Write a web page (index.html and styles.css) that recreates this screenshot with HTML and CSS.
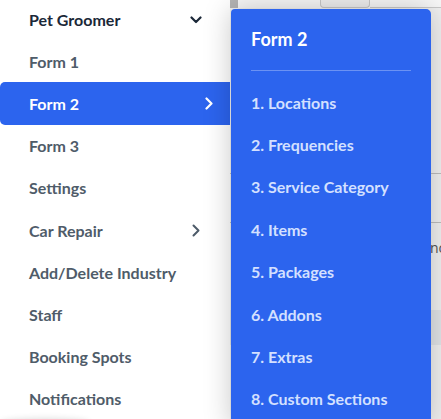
FILE: index.html
```html
<!DOCTYPE html>
<html>
<head>
<meta charset="utf-8">
<link rel="stylesheet" href="styles.css">
</head>
<body>
<div class="app">
  <aside class="sidebar">
    <ul class="nav">
      <li class="nav-item nav-head">
        <span>Pet Groomer</span>
        <svg class="chev-down" width="12" height="8" viewBox="0 0 12 8"><path d="M1.5 1.5 L6 6 L10.5 1.5" fill="none" stroke="#1b2838" stroke-width="2.2" stroke-linecap="round" stroke-linejoin="round"/></svg>
      </li>
      <li class="nav-item">Form 1</li>
      <li class="nav-item active">
        <span>Form 2</span>
        <svg class="chev-right" width="8" height="13" viewBox="0 0 8 13"><path d="M1.5 1.5 L6.5 6.5 L1.5 11.5" fill="none" stroke="#ffffff" stroke-width="2.2" stroke-linecap="round" stroke-linejoin="round"/></svg>
      </li>
      <li class="nav-item">Form 3</li>
      <li class="nav-item">Settings</li>
      <li class="nav-item">
        <span>Car Repair</span>
        <svg class="chev-right sub" width="8" height="13" viewBox="0 0 8 13"><path d="M1.5 1.5 L6.5 6.5 L1.5 11.5" fill="none" stroke="#4d5b69" stroke-width="2" stroke-linecap="round" stroke-linejoin="round"/></svg>
      </li>
      <li class="nav-item">Add/Delete Industry</li>
      <li class="nav-item">Staff</li>
      <li class="nav-item">Booking Spots</li>
      <li class="nav-item">Notifications</li>
    </ul>
    <div class="side-foot"></div>
  </aside>
  <main class="main">
    <div class="topbar">
      <div class="gutter"></div>
      <div class="tab"></div>
      <div class="topline"></div>
    </div>
    <div class="content">
      <div class="row r1"></div>
      <div class="row r2"></div>
      <div class="row r3"><span class="cell-text">Once</span></div>
      <div class="band"></div>
    </div>
  </main>
  <div class="flyout">
    <div class="fly-title">Form 2</div>
    <div class="fly-divider"></div>
    <ul class="fly-list">
      <li>1. Locations</li>
      <li>2. Frequencies</li>
      <li>3. Service Category</li>
      <li>4. Items</li>
      <li>5. Packages</li>
      <li>6. Addons</li>
      <li>7. Extras</li>
      <li>8. Custom Sections</li>
    </ul>
  </div>
</div>
</body>
</html>
```

FILE: styles.css
```css
* { box-sizing: border-box; }
html, body {
  margin: 0;
  padding: 0;
  width: 441px;
  height: 419px;
  overflow: hidden;
  font-family: Lato, "Noto Sans", sans-serif;
}
.app {
  position: relative;
  display: flex;
  width: 441px;
  height: 419px;
  background: #f2f3f4;
}
.sidebar {
  width: 230px;
  flex: none;
  background: #ffffff;
  position: relative;
}
.nav {
  list-style: none;
  margin: -2px 0 0 0;
  padding: 0;
}
.nav-item {
  height: 42.2px;
  display: flex;
  align-items: center;
  padding-left: 29px;
  padding-right: 28px;
  font-size: 16px;
  font-weight: 700;
  color: #4f5c69;
  position: relative;
  white-space: nowrap;
}
.nav-head {
  color: #1b2838;
  justify-content: space-between;
}
.chev-down { margin-top: 1px; }
.active {
  background: #2c64ee;
  color: #ffffff;
  border-radius: 5px 0 0 5px;
  justify-content: space-between;
  padding-right: 17px;
}
.nav-item:has(.sub) {
  justify-content: space-between;
  padding-right: 30px;
}
.side-foot {
  position: absolute;
  left: 0;
  bottom: -10px;
  width: 90px;
  height: 10px;
  box-shadow: 0 -1px 6px rgba(0,0,0,0.12);
  border-radius: 50%;
}
.main {
  flex: 1;
  display: flex;
  flex-direction: column;
  min-width: 0;
}
.topbar {
  height: 8px;
  display: flex;
  background: #f7f7f7;
}
.gutter {
  width: 8px;
  background: #b4b4b4;
}
.tab {
  margin-left: 82px;
  width: 50px;
  height: 8px;
  border: 1px solid #c8c8c8;
  border-top: none;
  border-radius: 0 0 4px 4px;
  background: #eeeeee;
}
.topline {
  flex: 1;
  border-bottom: 1px solid #c9c9c9;
}
.content {
  display: flex;
  flex-direction: column;
  background: #f0f0f0;
  flex: 1;
}
.row { border-bottom: 1px solid #bdbdbd; }
.r1 { height: 166px; }
.r2 { height: 49px; }
.r3 {
  height: 87px;
  border-bottom: none;
  padding-top: 15px;
  padding-left: 189px;
  font-size: 14px;
  color: #555;
  font-family: "Open Sans", sans-serif;
  white-space: nowrap;
  overflow: hidden;
}
.band {
  height: 35px;
  background: #e1e4e7;
}
.flyout {
  position: absolute;
  left: 231px;
  top: 9px;
  width: 200px;
  bottom: -10px;
  background: #2c64ee;
  border-radius: 4px 5px 0 0;
  box-shadow: 0 0 28px rgba(0,0,0,0.22);
  padding: 0 20px;
}
.fly-title {
  height: 60px;
  padding-top: 19px;
  font-size: 18px;
  font-weight: 700;
  color: #ffffff;
  line-height: 22px;
}
.fly-divider {
  height: 1px;
  background: rgba(255,255,255,0.3);
  margin: 1px 0 0 0;
}
.fly-list {
  list-style: none;
  margin: 10px 0 0 0;
  padding: 0;
}
.fly-list li {
  height: 42.4px;
  display: flex;
  align-items: center;
  font-size: 16px;
  font-weight: 700;
  color: #d4e0ff;
  white-space: nowrap;
}
```
